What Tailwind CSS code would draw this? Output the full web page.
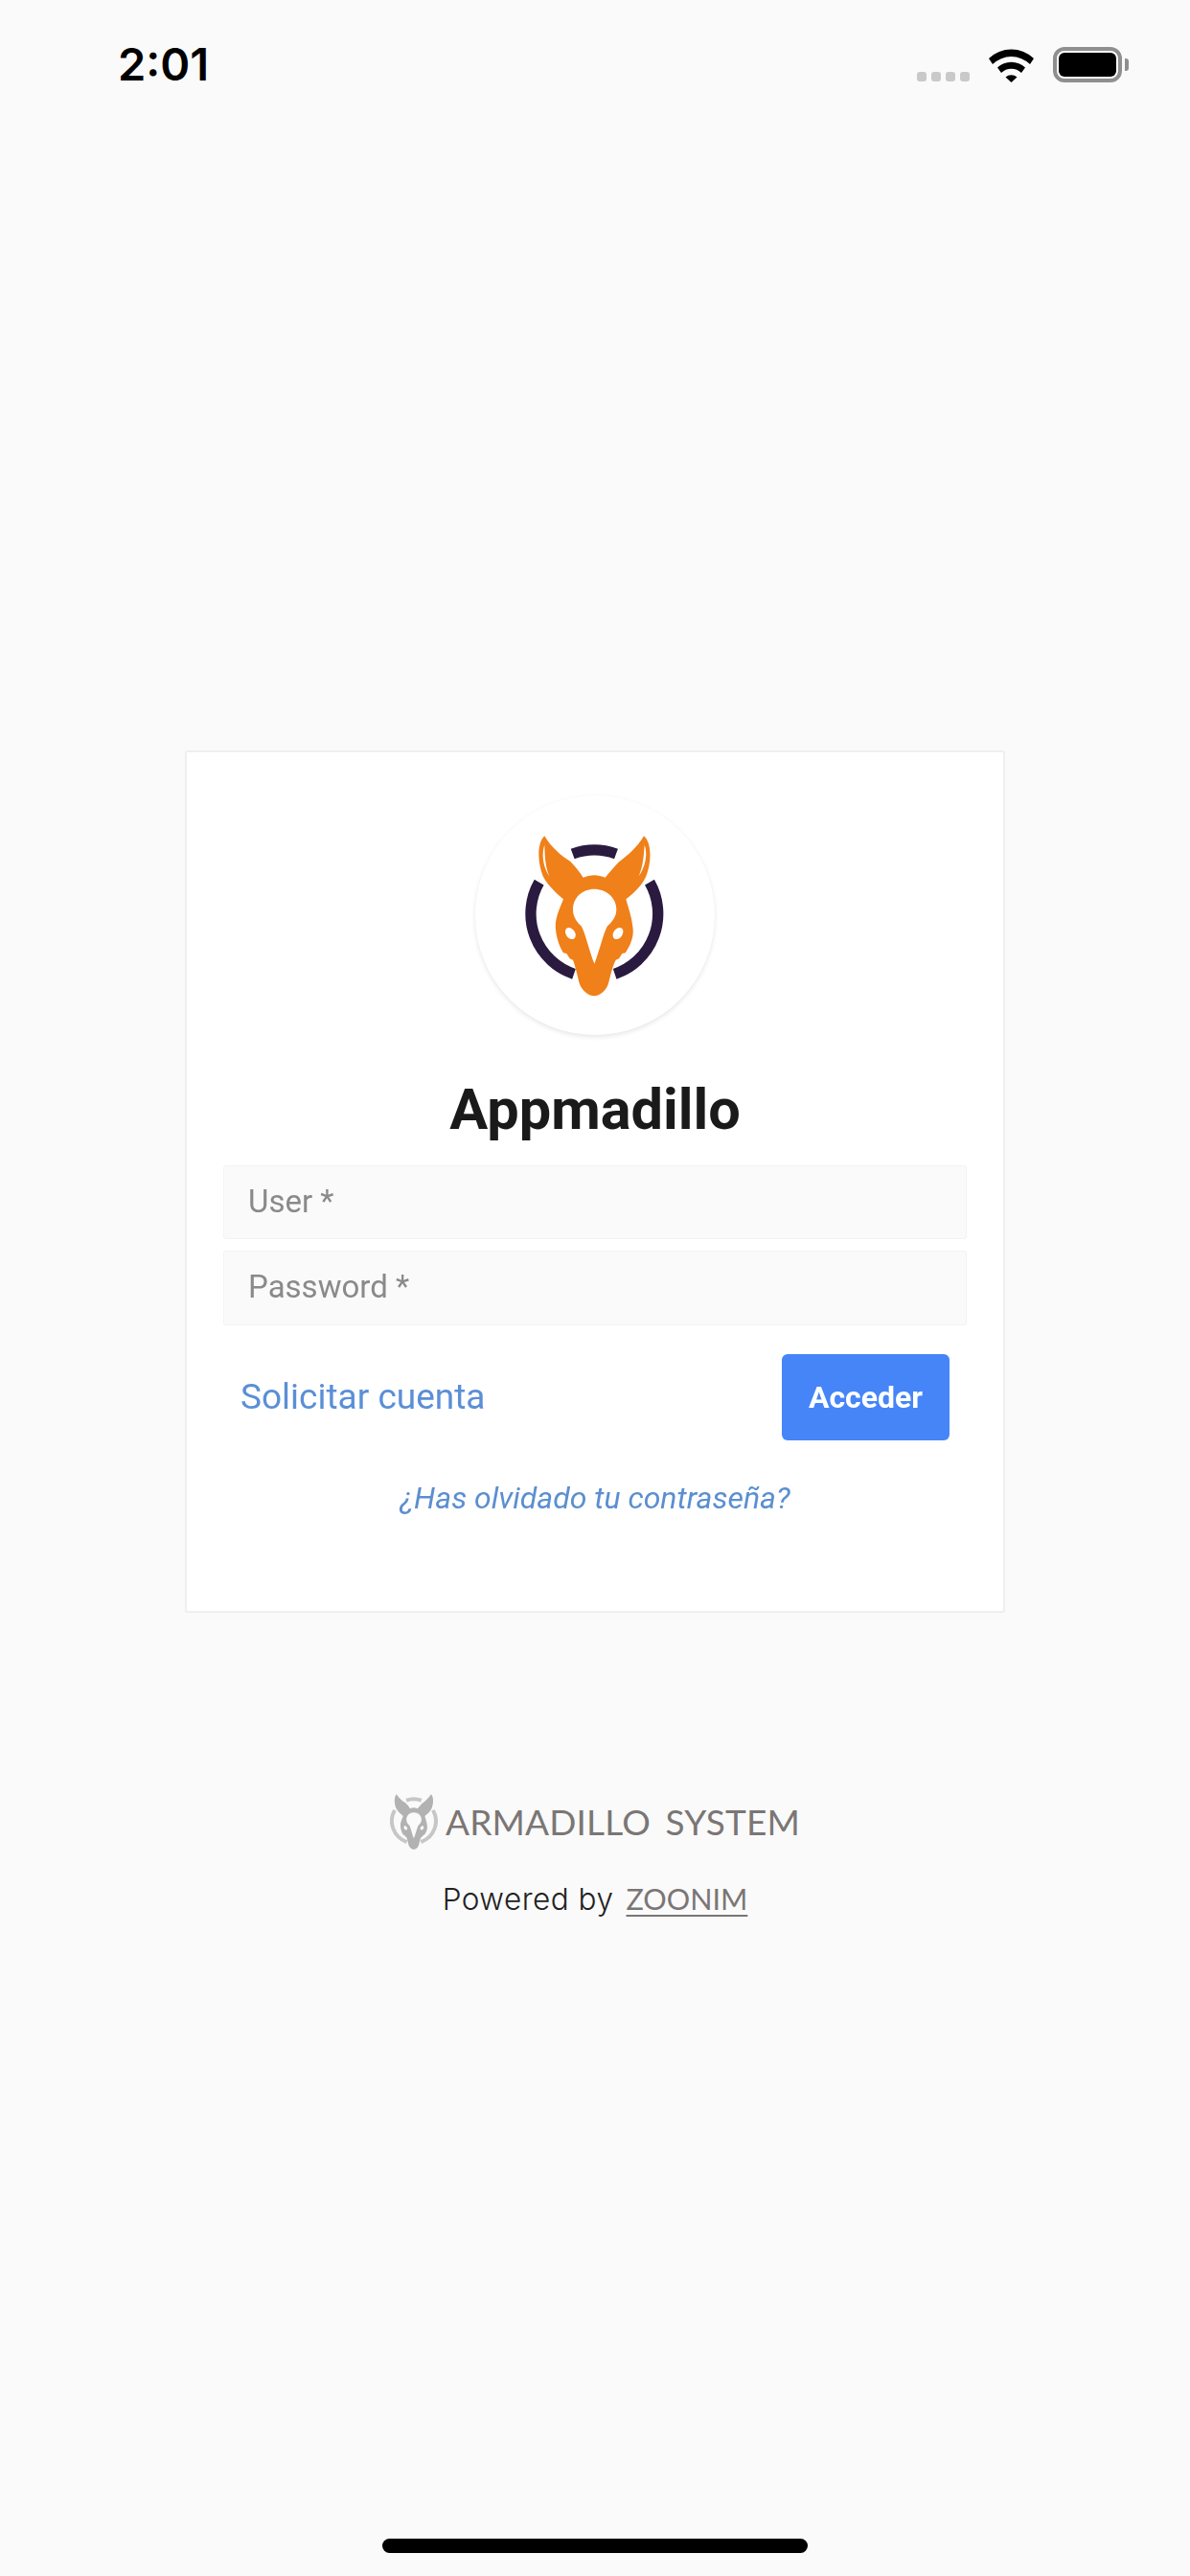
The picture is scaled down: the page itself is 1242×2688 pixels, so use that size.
<!DOCTYPE html>
<html>
<head>
<meta charset="utf-8">
<script src="https://cdn.jsdelivr.net/npm/@tailwindcss/browser@4"></script>
</head>
<body class="m-0">
<div class="w-[1242px] h-[2688px] bg-[#fafafa] flex flex-col font-['Roboto',sans-serif] overflow-hidden">
  <!-- status bar -->
  <div class="h-[100px] pt-[49px] pl-[123px] pr-[64px] flex items-start justify-between shrink-0">
    <span class="font-['Inter',sans-serif] font-semibold text-[47px] leading-[36px] text-black">2:01</span>
    <div class="flex items-end">
      <div class="flex gap-[5px] mb-[1px]">
        <div class="w-[10px] h-[10px] rounded-[3px] bg-[#c9c9c9]"></div>
        <div class="w-[10px] h-[10px] rounded-[3px] bg-[#c9c9c9]"></div>
        <div class="w-[10px] h-[10px] rounded-[3px] bg-[#c9c9c9]"></div>
        <div class="w-[10px] h-[10px] rounded-[3px] bg-[#c9c9c9]"></div>
      </div>
      <svg class="ml-[20px] block" width="47" height="36" viewBox="0 0 47 36" fill="#000">
        <path d="M0 11 A34 34 0 0 1 47 11 L43 17 A28 28 0 0 0 4 17 Z"/>
        <path d="M9 20.5 A21 21 0 0 1 38 20.5 L34 26 A15 15 0 0 0 13 26 Z"/>
        <path d="M17.5 30.5 A9 9 0 0 1 29.5 30.5 L23.5 36 Z"/>
      </svg>
      <div class="ml-[20px] w-[72px] h-[37px] border-[4px] border-[#8f8f8f] rounded-[12px] p-[2px] bg-white">
        <div class="w-full h-full bg-black rounded-[6px]"></div>
      </div>
      <div class="ml-[3px] mb-[12px] w-[4px] h-[13px] bg-[#8f8f8f] rounded-r-[3px]"></div>
    </div>
  </div>

  <!-- card -->
  <div class="mt-[683px] mx-auto w-[856px] h-[900px] bg-white border-2 border-[#efefef] rounded-[3px] flex flex-col items-center pt-[45px] px-[38px] shrink-0 blur-[0.6px]">
    <div class="w-[250px] h-[250px] rounded-full bg-white shadow-[0_2px_5px_rgba(0,0,0,0.10)] shrink-0">
      <svg width="250" height="250" viewBox="80 5 750 750">
        <g fill="none" stroke="#2b1a40" stroke-width="34">
          <path d="M385 188 A199 199 0 0 1 521 188"/>
          <path d="M280 277 A199 199 0 0 0 389 564"/>
          <path d="M626 277 A199 199 0 0 1 517 564"/>
        </g>
        <path fill="#f08019" d="M297 132 C276 150 272 205 292 258 C308 288 335 312 356 330 C342 365 328 395 332 425 C335 455 345 480 356 498 L366 500 L376 516 L386 520 C392 535 398 560 405 590 C412 615 435 633 452 633 C470 633 492 615 498 590 C505 560 512 535 520 520 L530 516 L540 500 L550 498 C568 470 578 445 573 415 C570 385 560 360 552 330 C575 312 602 288 615 258 C635 205 630 150 608 132 C590 165 555 195 528 215 C512 232 497 250 487 262 C465 252 440 252 418 262 C408 245 393 228 378 212 C350 195 315 165 297 132 Z"/>
        <path fill="#fff" d="M453 298 C415 298 386 325 386 362 C386 385 398 402 412 414 C425 436 436 490 453 532 C470 490 481 436 494 414 C508 402 522 385 522 362 C522 325 490 298 453 298 Z"/>
        <ellipse fill="#fff" cx="378" cy="437" rx="14" ry="20" transform="rotate(-35 378 437)"/>
        <ellipse fill="#fff" cx="527" cy="437" rx="14" ry="20" transform="rotate(35 527 437)"/>
        <path fill="#fff" d="M297 160 C288 185 290 225 312 258 C298 225 298 190 297 160 Z"/>
        <path fill="#fff" d="M610 160 C620 185 615 225 592 258 C606 225 608 190 610 160 Z"/>
      </svg>
    </div>
    <h1 class="mt-[44px] text-[59.5px] leading-[68px] font-bold text-[#1a1a1a] text-center">Appmadillo</h1>
    <div class="mt-[24px] w-full h-[77px] bg-[#fafafa] border border-[#f3f3f3] rounded-[3px] flex items-center pl-[25px] pb-[2px] text-[33px] text-[#8a8a8a]">User *</div>
    <div class="mt-[12px] w-full h-[78px] bg-[#fafafa] border border-[#f3f3f3] rounded-[3px] flex items-center pl-[25px] pb-[2px] text-[33px] text-[#8a8a8a]">Password *</div>
    <div class="mt-[30px] w-full px-[18px] h-[90px] flex items-center justify-between">
      <span class="text-[37px] text-[#5b8fd6]">Solicitar cuenta</span>
      <button class="w-[175px] h-[90px] bg-[#4585f8] rounded-[6px] text-white text-[32px] font-bold">Acceder</button>
    </div>
    <a class="mt-[40px] text-[32px] leading-[40px] italic text-[#5b8fd0]">¿Has olvidado tu contraseña?</a>
  </div>

  <!-- footer -->
  <div class="mt-[189px] flex items-center justify-center gap-[8px] h-[58px] shrink-0">
    <svg width="50" height="58" viewBox="237 132 433 500">
      <g fill="none" stroke="#c6c6c6" stroke-width="34">
        <path d="M385 188 A199 199 0 0 1 521 188"/>
        <path d="M280 277 A199 199 0 0 0 389 564"/>
        <path d="M626 277 A199 199 0 0 1 517 564"/>
      </g>
      <path fill="#b2b2b2" d="M297 132 C276 150 272 205 292 258 C308 288 335 312 356 330 C342 365 328 395 332 425 C335 455 345 480 356 498 L366 500 L376 516 L386 520 C392 535 398 560 405 590 C412 615 435 633 452 633 C470 633 492 615 498 590 C505 560 512 535 520 520 L530 516 L540 500 L550 498 C568 470 578 445 573 415 C570 385 560 360 552 330 C575 312 602 288 615 258 C635 205 630 150 608 132 C590 165 555 195 528 215 C512 232 497 250 487 262 C465 252 440 252 418 262 C408 245 393 228 378 212 C350 195 315 165 297 132 Z"/>
      <path fill="#fafafa" d="M453 298 C415 298 386 325 386 362 C386 385 398 402 412 414 C425 436 436 490 453 532 C470 490 481 436 494 414 C508 402 522 385 522 362 C522 325 490 298 453 298 Z"/>
      <ellipse fill="#fafafa" cx="378" cy="437" rx="14" ry="20" transform="rotate(-35 378 437)"/>
      <ellipse fill="#fafafa" cx="527" cy="437" rx="14" ry="20" transform="rotate(35 527 437)"/>
    </svg>
    <span class="font-['Lato',sans-serif] font-normal text-[37px] leading-[50px] text-[#7a7675] tracking-[0.15px] [word-spacing:6px]">ARMADILLO SYSTEM</span>
  </div>
  <div class="mt-[29px] flex items-baseline justify-center gap-[13px] shrink-0">
    <span class="font-['Inter',sans-serif] font-light text-[31.5px] leading-[44px] text-[#222] tracking-[0.5px]">Powered by</span>
    <span class="font-['Lato',sans-serif] text-[30.5px] leading-[44px] text-[#7a7675] underline underline-offset-[5px] decoration-[2px]">ZOONIM</span>
  </div>

  <!-- home indicator -->
  <div class="mt-auto mb-[24px] mx-auto w-[444px] h-[15px] rounded-[8px] bg-black shrink-0"></div>
</div>
</body>
</html>
